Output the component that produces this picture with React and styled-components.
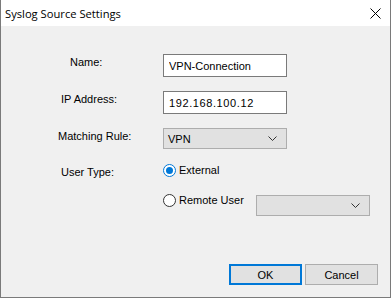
import React from "react";
import styled, { createGlobalStyle } from "styled-components";

const Global = createGlobalStyle`
  html, body {
    margin: 0;
    padding: 0;
    background: #f0f0f0;
  }
`;

const Ventana = styled.div`
  width: 391px;
  height: 298px;
  box-sizing: border-box;
  border: 1px solid #7a7a7a;
  border-top: none;
  background: #f0f0f0;
  display: flex;
  flex-direction: column;
  font-family: "Liberation Sans", Arial, sans-serif;
  font-size: 11px;
  color: #000;
`;

const BarraTitulo = styled.div`
  height: 26px;
  background: #fff;
  display: flex;
  align-items: center;
  justify-content: space-between;
  padding: 0 9px 0 4px;
  font-family: "Open Sans", "Noto Sans", sans-serif;
  font-size: 11.2px;
  color: #000;
`;

const Cerrar = styled.button`
  width: 12px;
  height: 12px;
  border: none;
  padding: 0;
  background: transparent;
  display: flex;
  align-items: center;
  justify-content: center;
`;

const Formulario = styled.div`
  display: flex;
  flex-direction: column;
  padding-top: 28px;
`;

const Fila = styled.div`
  display: flex;
  align-items: flex-start;
  height: ${(p) => p.$h}px;
  margin-bottom: ${(p) => p.$mb || 0}px;
`;

const Etiqueta = styled.div`
  width: 162px;
  box-sizing: border-box;
  padding-left: ${(p) => p.$indent}px;
  padding-top: ${(p) => p.$top || 2}px;
  flex-shrink: 0;
  line-height: 13px;
`;

const Entrada = styled.input`
  width: 124px;
  height: 23px;
  box-sizing: border-box;
  border: 1px solid #7a7a7a;
  background: #fff;
  padding: 0 5px;
  font-family: "Liberation Sans", Arial, sans-serif;
  font-size: 11px;
  color: #000;
  outline: none;
  letter-spacing: ${(p) => p.$ls || 0}px;
`;

const Combo = styled.div`
  width: ${(p) => p.$w}px;
  height: 21px;
  box-sizing: border-box;
  border: 1px solid #adadad;
  background: #e1e1e1;
  display: flex;
  align-items: center;
  justify-content: space-between;
  padding: 0 9px 0 4px;
  margin-top: ${(p) => p.$mt || 0}px;
`;

const Radio = styled.label`
  display: flex;
  align-items: center;
  gap: 3px;
  width: ${(p) => p.$w || "auto"};
  line-height: 13px;
`;

const Pie = styled.div`
  margin-top: auto;
  display: flex;
  justify-content: flex-end;
  gap: 3px;
  padding: 0 12px 12px 0;
`;

const Boton = styled.button`
  width: 73px;
  height: 21px;
  box-sizing: border-box;
  background: #e1e1e1;
  border: ${(p) => (p.$primario ? "2px solid #0078d7" : "1px solid #adadad")};
  font-family: "Liberation Sans", Arial, sans-serif;
  font-size: 11px;
  color: #000;
  padding: 0;
`;

const Flecha = () => (
  <svg width="9" height="5" viewBox="0 0 9 5">
    <path d="M0.5 0.5 L4.5 4.5 L8.5 0.5" fill="none" stroke="#333" strokeWidth="1" />
  </svg>
);

const CirculoRadio = ({ activo }) => (
  <svg width="13" height="13" viewBox="0 0 13 13">
    <circle cx="6.5" cy="6.5" r="6" fill="#fff" stroke={activo ? "#0078d7" : "#333"} strokeWidth="1" />
    {activo && <circle cx="6.5" cy="6.5" r="3.5" fill="#0078d7" />}
  </svg>
);

export default function App() {
  return (
    <>
      <Global />
      <Ventana>
        <BarraTitulo>
          <span>Syslog Source Settings</span>
          <Cerrar>
            <svg width="11" height="11" viewBox="0 0 11 11">
              <path d="M0.5 0.5 L10.5 10.5 M10.5 0.5 L0.5 10.5" stroke="#000" strokeWidth="1" />
            </svg>
          </Cerrar>
        </BarraTitulo>
        <Formulario>
          <Fila $h={23} $mb={14}>
            <Etiqueta $indent={69} $top={2}>Name:</Etiqueta>
            <Entrada defaultValue="VPN-Connection" />
          </Fila>
          <Fila $h={23} $mb={14}>
            <Etiqueta $indent={60} $top={2}>IP Address:</Etiqueta>
            <Entrada defaultValue="192.168.100.12" $ls={0.6} />
          </Fila>
          <Fila $h={21} $mb={15}>
            <Etiqueta $indent={57} $top={2}>Matching Rule:</Etiqueta>
            <Combo $w={124}>
              <span>VPN</span>
              <Flecha />
            </Combo>
          </Fila>
          <Fila $h={16} $mb={14}>
            <Etiqueta $indent={60} $top={0}>User Type:</Etiqueta>
            <Radio>
              <CirculoRadio activo />
              <span>External</span>
            </Radio>
          </Fila>
          <Fila $h={24}>
            <Etiqueta $indent={0} />
            <Radio $w="93px">
              <CirculoRadio />
              <span>Remote User</span>
            </Radio>
            <Combo $w={114} $mt={1}>
              <span />
              <Flecha />
            </Combo>
          </Fila>
        </Formulario>
        <Pie>
          <Boton $primario>OK</Boton>
          <Boton>Cancel</Boton>
        </Pie>
      </Ventana>
    </>
  );
}
